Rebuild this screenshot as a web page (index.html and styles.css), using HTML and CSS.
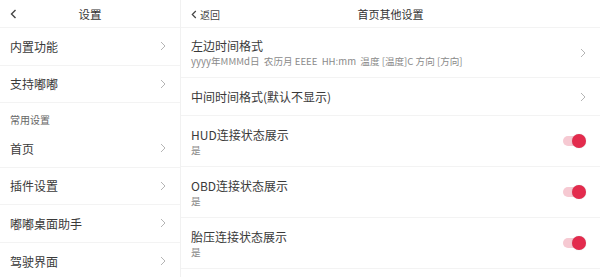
FILE: index.html
```html
<!DOCTYPE html>
<html lang="zh">
<head>
<meta charset="utf-8">
<link rel="stylesheet" href="styles.css">
</head>
<body>
<div class="app">
  <aside class="left">
    <div class="lhead">
      <svg class="back" width="7" height="10" viewBox="0 0 7 10"><polyline points="5.5,1 1.5,5 5.5,9" fill="none" stroke="#444" stroke-width="1.4"/></svg>
      <span class="ltitle">设置</span>
    </div>
    <div class="lrow"><span>内置功能</span><svg class="chev" width="6" height="10" viewBox="0 0 6 10"><polyline points="1,1 5,5 1,9" fill="none" stroke="#b5b5b5" stroke-width="1"/></svg></div>
    <div class="lrow"><span>支持嘟嘟</span><svg class="chev" width="6" height="10" viewBox="0 0 6 10"><polyline points="1,1 5,5 1,9" fill="none" stroke="#b5b5b5" stroke-width="1"/></svg></div>
    <div class="section">常用设置</div>
    <div class="lrow first"><span>首页</span><svg class="chev" width="6" height="10" viewBox="0 0 6 10"><polyline points="1,1 5,5 1,9" fill="none" stroke="#b5b5b5" stroke-width="1"/></svg></div>
    <div class="lrow"><span>插件设置</span><svg class="chev" width="6" height="10" viewBox="0 0 6 10"><polyline points="1,1 5,5 1,9" fill="none" stroke="#b5b5b5" stroke-width="1"/></svg></div>
    <div class="lrow"><span>嘟嘟桌面助手</span><svg class="chev" width="6" height="10" viewBox="0 0 6 10"><polyline points="1,1 5,5 1,9" fill="none" stroke="#b5b5b5" stroke-width="1"/></svg></div>
    <div class="lrow last"><span>驾驶界面</span><svg class="chev" width="6" height="10" viewBox="0 0 6 10"><polyline points="1,1 5,5 1,9" fill="none" stroke="#b5b5b5" stroke-width="1"/></svg></div>
  </aside>
  <main class="right">
    <div class="rhead">
      <span class="ret"><svg width="6" height="9" viewBox="0 0 6 9"><polyline points="4.8,1 1.3,4.5 4.8,8" fill="none" stroke="#444" stroke-width="1.2"/></svg>返回</span>
      <span class="rtitle">首页其他设置</span>
    </div>
    <div class="rrow tall">
      <div class="txt"><div class="t">左边时间格式</div><div class="s">yyyy年MMMd日&nbsp; 农历月 EEEE&nbsp; HH:mm&nbsp; 温度 [温度]C 方向 [方向]</div></div>
      <svg class="chev" width="6" height="10" viewBox="0 0 6 10"><polyline points="1,1 5,5 1,9" fill="none" stroke="#b5b5b5" stroke-width="1"/></svg>
    </div>
    <div class="rrow mid">
      <div class="txt"><div class="t">中间时间格式(默认不显示)</div></div>
      <svg class="chev" width="6" height="10" viewBox="0 0 6 10"><polyline points="1,1 5,5 1,9" fill="none" stroke="#b5b5b5" stroke-width="1"/></svg>
    </div>
    <div class="rrow sw">
      <div class="txt"><div class="t">HUD连接状态展示</div><div class="s">是</div></div>
      <span class="toggle"><span class="knob"></span></span>
    </div>
    <div class="rrow sw">
      <div class="txt"><div class="t">OBD连接状态展示</div><div class="s">是</div></div>
      <span class="toggle"><span class="knob"></span></span>
    </div>
    <div class="rrow sw">
      <div class="txt"><div class="t">胎压连接状态展示</div><div class="s">是</div></div>
      <span class="toggle"><span class="knob"></span></span>
    </div>
  </main>
</div>
</body>
</html>
```
FILE: styles.css
```css
* { box-sizing: border-box; }
html, body { margin: 0; padding: 0; background: #fff; }
body {
  font-family: "Noto Sans CJK SC", "Noto Sans", sans-serif;
  color: #333;
  width: 600px;
  height: 277px;
  overflow: hidden;
}
.app { display: flex; height: 277px; }
.left {
  width: 181px;
  flex: none;
  border-right: 1px solid #f1f1f1;
}
.lhead {
  height: 28px;
  display: flex;
  align-items: center;
  justify-content: center;
  position: relative;
  border-bottom: 1px solid #f3f3f3;
}
.back { position: absolute; left: 10px; top: 9px; }
.ltitle { font-size: 11.5px; color: #333; }
.lrow {
  height: 37.5px;
  display: flex;
  align-items: center;
  justify-content: space-between;
  padding: 0 14px 0 10px;
  font-size: 12px;
  color: #3a3a3a;
  border-bottom: 1px solid #f3f3f3;
}
.lrow.last { border-bottom: none; }
.section {
  height: 27px;
  padding: 9px 0 0 10px;
  font-size: 10px;
  color: #666;
}
.right { flex: 1; }
.rhead {
  height: 28px;
  position: relative;
  display: flex;
  align-items: center;
  justify-content: center;
  border-bottom: 1px solid #f3f3f3;
}
.ret {
  position: absolute;
  left: 10px;
  top: 7px;
  font-size: 10px;
  color: #444;
  display: flex;
  align-items: center;
  gap: 3px;
}
.rtitle { font-size: 11px; color: #333; }
.rrow {
  display: flex;
  align-items: center;
  justify-content: space-between;
  padding: 0 14px 0 10px;
  border-bottom: 1px solid #f3f3f3;
}
.rrow.tall { height: 50px; }
.rrow.mid { height: 38px; }
.rrow.sw { height: 51px; }
.t { font-size: 12px; color: #3a3a3a; line-height: 16px; }
.s { font-size: 9.6px; color: #8a8a8a; line-height: 12px; margin-top: 1px; }
.toggle {
  width: 21px;
  height: 10px;
  border-radius: 5px;
  background: #f6c9d2;
  position: relative;
  margin-right: 2px;
}
.knob {
  position: absolute;
  right: -2px;
  top: -2px;
  width: 14px;
  height: 14px;
  border-radius: 50%;
  background: #e32b4d;
  box-shadow: 0 0 1px rgba(0,0,0,0.25);
}
```
